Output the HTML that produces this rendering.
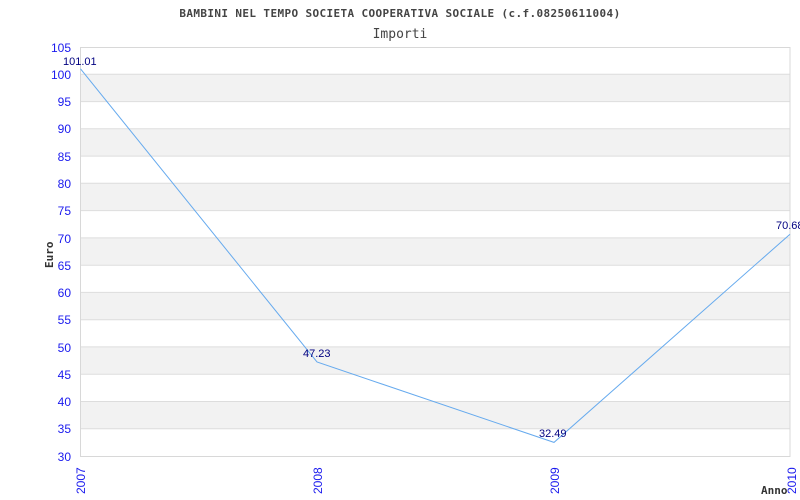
<!DOCTYPE html>
<html><head><style>html,body{margin:0;padding:0;background:#fff;width:800px;height:500px;overflow:hidden}</style></head><body>
<svg width="800" height="500" xmlns="http://www.w3.org/2000/svg" font-family="Liberation Sans, DejaVu Sans, sans-serif">
<rect width="800" height="500" fill="#fff"/>
<g fill="#f2f2f2">
<rect x="80" y="74.3" width="710" height="27.3"/>
<rect x="80" y="128.8" width="710" height="27.3"/>
<rect x="80" y="183.3" width="710" height="27.3"/>
<rect x="80" y="237.9" width="710" height="27.3"/>
<rect x="80" y="292.4" width="710" height="27.3"/>
<rect x="80" y="346.9" width="710" height="27.3"/>
<rect x="80" y="401.5" width="710" height="27.3"/>
</g>
<g stroke="#dddddd" stroke-width="1">
<line x1="80" x2="790" y1="74.3" y2="74.3"/><line x1="80" x2="790" y1="101.6" y2="101.6"/>
<line x1="80" x2="790" y1="128.8" y2="128.8"/><line x1="80" x2="790" y1="156.1" y2="156.1"/>
<line x1="80" x2="790" y1="183.3" y2="183.3"/><line x1="80" x2="790" y1="210.6" y2="210.6"/>
<line x1="80" x2="790" y1="237.9" y2="237.9"/><line x1="80" x2="790" y1="265.2" y2="265.2"/>
<line x1="80" x2="790" y1="292.4" y2="292.4"/><line x1="80" x2="790" y1="319.7" y2="319.7"/>
<line x1="80" x2="790" y1="346.9" y2="346.9"/><line x1="80" x2="790" y1="374.2" y2="374.2"/>
<line x1="80" x2="790" y1="401.5" y2="401.5"/><line x1="80" x2="790" y1="428.8" y2="428.8"/>
</g>
<rect x="80.5" y="47.5" width="709.5" height="409" fill="none" stroke="#d8d8d8"/>
<polyline points="80.5,68.8 317,362 554,442.4 790,234.2" fill="none" stroke="#66aaee" stroke-width="1"/>
<text x="400" y="17" text-anchor="middle" font-family="DejaVu Sans Mono, Liberation Mono, monospace" font-size="11" font-weight="bold" fill="#444" letter-spacing="0.38">BAMBINI NEL TEMPO SOCIETA COOPERATIVA SOCIALE (c.f.08250611004)</text>
<text x="400" y="38" text-anchor="middle" font-family="DejaVu Sans Mono, Liberation Mono, monospace" font-size="13" fill="#444">Importi</text>
<g fill="#1a1aee" font-size="12" text-anchor="end">
<text x="71" y="52">105</text><text x="71" y="79">100</text><text x="71" y="106">95</text>
<text x="71" y="133">90</text><text x="71" y="161">85</text><text x="71" y="188">80</text>
<text x="71" y="215">75</text><text x="71" y="243">70</text><text x="71" y="270">65</text>
<text x="71" y="297">60</text><text x="71" y="324">55</text><text x="71" y="352">50</text>
<text x="71" y="379">45</text><text x="71" y="406">40</text><text x="71" y="433">35</text>
<text x="71" y="461">30</text>
</g>
<g fill="#1a1aee" font-size="12">
<text transform="translate(85,494) rotate(-90)">2007</text>
<text transform="translate(322,494) rotate(-90)">2008</text>
<text transform="translate(559,494) rotate(-90)">2009</text>
<text transform="translate(796,494) rotate(-90)">2010</text>
</g>
<g fill="#000080" font-size="11">
<text x="63" y="65">101.01</text>
<text x="303" y="357">47.23</text>
<text x="539" y="437">32.49</text>
<text x="776" y="229">70.68</text>
</g>
<text transform="translate(53,268) rotate(-90)" font-family="DejaVu Sans Mono, Liberation Mono, monospace" font-size="11" font-weight="bold" fill="#333">Euro</text>
<text x="761" y="494" font-family="DejaVu Sans Mono, Liberation Mono, monospace" font-size="11" font-weight="bold" fill="#333">Anno</text>
</svg>
</body></html>
